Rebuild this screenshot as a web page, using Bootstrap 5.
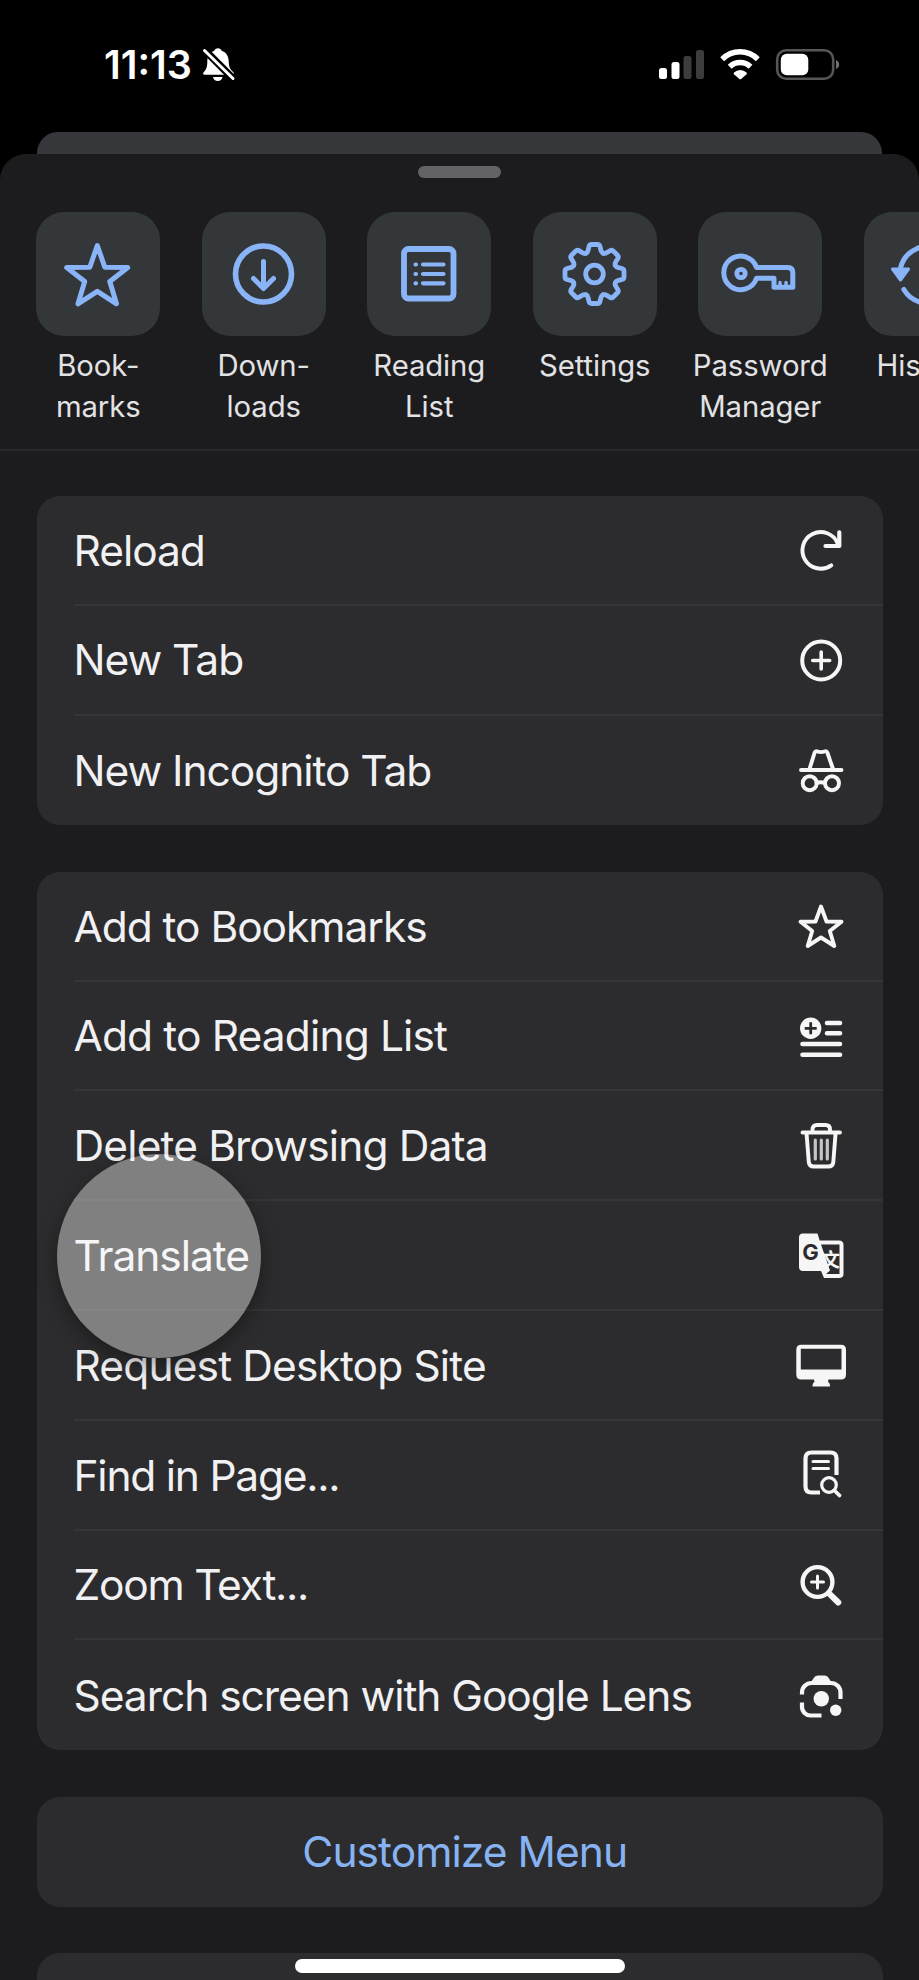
<!DOCTYPE html>
<html lang="en">
<head>
<meta charset="utf-8">
<meta name="viewport" content="width=device-width, initial-scale=1">
<title>Browser menu</title>
<link rel="stylesheet" href="https://cdn.jsdelivr.net/npm/bootstrap@5.3.0/dist/css/bootstrap.min.css">
<style>
html,body{height:1980px;overflow:hidden}
body{background:#000;color:#f1f1f3;font-family:Inter,"Liberation Sans",sans-serif}
.screen{width:919px;height:1980px}
.status{height:132px;padding:45px 79px 0 104px}
.clock{font-size:39.5px;line-height:40px;font-weight:600;letter-spacing:0;color:#fff;width:98px;white-space:nowrap}
.behind{height:22px;margin:0 37px;background:#36373a;border-radius:21px 21px 0 0}
.sheet{height:1826px;background:#1c1c1e;border-radius:26px 26px 0 0}
.grabber{width:83px;height:12px;margin-top:12px;background:#636367}
.shortcuts{margin:34px 0 0 15.5px;height:237px}
.shortcut{flex:0 0 165.5px;font-size:29.3px;line-height:41px;letter-spacing:-.1px;color:#e2e2e4}
.tile{width:124px;height:124px;border-radius:28px;background:#343739;margin-bottom:8.500px}
.tile svg{fill:none;stroke:#8ab4f8;stroke-width:5;stroke-linecap:round;stroke-linejoin:round}
.rule{height:2px;background:#29292d}
.menu{margin:0 37px;width:845.5px;border-radius:23px;background:#2c2c2e}
.menu-a{margin-top:45px}
.menu-b,.menu-c,.menu-d{margin-top:46.5px}
.menu .entry{height:109.8px;margin-left:36.500px;padding-right:34.500px;font-size:42.5px;letter-spacing:-1.050px;line-height:50px;white-space:nowrap;border-bottom:2.4px solid #353538}
.menu .entry:last-child{border-bottom:0}
.entry span{padding-top:1.500px}
.menu .entry.loose{letter-spacing:-.87px}
.menu .entry.tight{letter-spacing:-1.240px}
.entry svg{fill:none;stroke:#f6f6f7;stroke-width:3.9;stroke-linecap:round;stroke-linejoin:round}
.entry svg text{letter-spacing:0}
.entry .solid{fill:#f6f6f7;stroke:none}
.entry .dark{fill:#2c2c2e;stroke:none}
.menu-c{height:110px;font-size:42.5px;letter-spacing:-.950px;color:#87b3f2;padding-left:10px}
.menu-d{height:60px}
.touch{width:204px;height:204px;left:57px;top:1154px;background:rgba(255,255,255,.4);box-shadow:0 7px 20px rgba(0,0,0,.36)}
.home{width:330px;height:14px;left:294.5px;top:1959px}
</style>
</head>
<body>
<main class="screen position-relative overflow-hidden">
  <div class="status d-flex justify-content-between align-items-start">
    <div class="d-flex">
      <div class="clock">11:13</div>
      <svg width="34" height="40" viewBox="0 0 34 40" fill="#fff"><path d="M16 3.200c1.800 0 3.300 1 3.700 2.600 4.400 1.500 6.800 5.300 7 10.200.2 6 1.200 8 4.600 11.300.8.800.6 2.400-.8 2.400H2.600C1 29.700.7 28.200 1.700 27.200 4.900 23.800 5.300 21 5.300 16c.2-5 2.700-8.800 7-10.200C12.700 4.200 14.200 3.200 16 3.200zM11 32h9.500c-.4 2.400-2.200 4-4.700 4S11.400 34.400 11 32z"/><path d="M2.500 4.800L31.500 34" stroke="#000" stroke-width="7.500"/><path d="M2.500 5.500L31 33.500" stroke="#fff" stroke-width="3" stroke-linecap="round"/></svg>
    </div>
    <svg width="182" height="40" viewBox="0 0 182 40" fill="#fff"><rect x="1" y="23" width="8" height="11" rx="2.500"/><rect x="13.500" y="17" width="8" height="17" rx="2.500"/><g fill="#3c3c3c"><rect x="25.500" y="11" width="8" height="23" rx="2.500"/><rect x="38" y="5" width="8" height="29" rx="2.500"/></g><g fill="none" stroke="#fff" stroke-width="5.500"><path d="M64.200 14.300a25 25 0 0 1 35.600 0"/><path d="M71.700 21.700a15 15 0 0 1 20.800 0"/></g><path d="M76 27.500a9 9 0 0 1 12.500 0q.8.900 0 1.700L83.500 33.700q-1.200 1-2.400 0L76 29.200q-.8-.8 0-1.700z"/><rect x="119.200" y="5.200" width="56" height="28.600" rx="9" fill="none" stroke="#565656" stroke-width="2.600"/><rect x="122.800" y="8.800" width="27.500" height="21.400" rx="6"/><path d="M178 15v9q3.200-1.500 3.200-4.500t-3.200-4.500z" fill="#707070"/></svg>
  </div>
  <div class="behind"></div>
  <section class="sheet overflow-hidden">
    <div class="d-flex justify-content-center"><div class="grabber rounded-pill"></div></div>
    <nav class="shortcuts d-flex">
      <div class="shortcut d-flex flex-column align-items-center text-center"><div class="tile"><svg width="124" height="124"><path d="M61.300 33.500L68.800 55.300 91.800 55.500 73.800 69.500 80.500 91.800 61.300 79.300 42 91.800 48.700 69.500 30.700 55.500 53.800 55.300z"/></svg></div>Book-<br>marks</div>
      <div class="shortcut d-flex flex-column align-items-center text-center"><div class="tile"><svg width="124" height="124"><circle cx="61.500" cy="62" r="28" stroke-width="5.600"/><path d="M61.500 49.500V76M51.500 66.500l10 10 10-10"/></svg></div>Down-<br>loads</div>
      <div class="shortcut d-flex flex-column align-items-center text-center"><div class="tile"><svg width="124" height="124"><rect x="37" y="37" width="49.500" height="49.500" rx="4.500" stroke-width="5.800"/><path d="M48.500 52.500h.5M48.500 62h.5M48.500 71.300h.5M56 52.500h20.500M56 62h20.500M56 71.300h20.500" stroke-width="4.200"/></svg></div>Reading<br>List</div>
      <div class="shortcut d-flex flex-column align-items-center text-center"><div class="tile"><svg width="124" height="124"><defs><path id="tooth" d="M-8.600-20.800Q-6.800-21.600-6.300-24L-5.500-27.500Q-5-29.500-3-29.500H3Q5-29.500 5.500-27.500L6.300-24Q6.800-21.600 8.600-20.800"/></defs><g transform="translate(61.500 62)" stroke-width="4.800"><use href="#tooth"/><use href="#tooth" transform="rotate(45)"/><use href="#tooth" transform="rotate(90)"/><use href="#tooth" transform="rotate(135)"/><use href="#tooth" transform="rotate(180)"/><use href="#tooth" transform="rotate(225)"/><use href="#tooth" transform="rotate(270)"/><use href="#tooth" transform="rotate(315)"/><circle r="8.800"/></g></svg></div>Settings</div>
      <div class="shortcut d-flex flex-column align-items-center text-center"><div class="tile"><svg width="124" height="124"><path d="M58.500 55.500H90Q94.800 55.500 94.800 60.500V75.300H76V66.200H58.500A16.800 16.800 0 1 1 58.500 55.500z"/><circle cx="43" cy="61.500" r="4.200" stroke-width="4.800"/><path d="M82 75V70.500M88 75V70.500" stroke-width="3.400"/></svg></div>Password<br>Manager</div>
      <div class="shortcut d-flex flex-column align-items-center text-center"><div class="tile"><svg width="124" height="124"><path d="M36.500 56A28.500 28.500 0 1 1 39.800 77.500"/><path d="M28.500 57h16L36.500 68z" fill="#8ab4f8" stroke-width="3"/></svg></div>History</div>
    </nav>
    <div class="rule"></div>
    <div class="menu menu-a">
      <div class="entry d-flex align-items-center justify-content-between"><span>Reload</span><svg width="54" height="54"><path d="M37.300 42.300A18.300 18.300 0 1 1 43.700 20.500"/><path d="M45.300 9.300V23H31.500" stroke-width="4.200"/></svg></div>
      <div class="entry d-flex align-items-center justify-content-between"><span>New Tab</span><svg width="54" height="54"><circle cx="27.200" cy="27.500" r="19" stroke-width="4"/><path d="M18.700 27.500h17M27.200 19v17" stroke-width="3.600"/></svg></div>
      <div class="entry d-flex align-items-center justify-content-between"><span>New Incognito Tab</span><svg width="54" height="54"><path d="M7 27H47.500M15.500 26L20.500 10q.8-2.300 3-1.500 3.500 1.200 7 0 2.300-.8 3 1.500L39 26M22.600 40q4.200-1.500 8 0"/><circle cx="15.700" cy="40.200" r="7"/><circle cx="38" cy="40.200" r="7"/></svg></div>
    </div>
    <div class="menu menu-b">
      <div class="entry d-flex align-items-center justify-content-between"><span>Add to Bookmarks</span><svg width="54" height="54"><path d="M27 7.500L32.500 22.500 47.500 22.800 35.800 32 40.300 47 27 38.500 13.700 47 18.200 32 6.500 22.800 21.500 22.500z"/></svg></div>
      <div class="entry loose d-flex align-items-center justify-content-between"><span>Add to Reading List</span><svg width="54" height="54"><circle class="solid" cx="16.700" cy="19.300" r="10.700"/><path d="M10.700 19.300h12M16.700 13.300v12" stroke="#2c2c2e" stroke-width="2.800" stroke-linecap="butt"/><path d="M33 14H46M33 24.300H46M8.500 35H46M8.500 45.700H46" stroke-width="4.600"/></svg></div>
      <div class="entry loose d-flex align-items-center justify-content-between"><span>Delete Browsing Data</span><svg width="54" height="54"><path d="M8.500 14.500H46M18.500 14v-2.500Q18.500 7 23 7h8.500q4.500 0 4.500 4.500V14M12.500 15l2.300 29q.4 4.500 5 4.500h14.500q4.600 0 5-4.500l2.300-29"/><path d="M21.300 22v19M27.300 22v19M33.300 22v19" stroke="#c4c4c6" stroke-width="3.200"/></svg></div>
      <div class="entry d-flex align-items-center justify-content-between"><span>Translate</span><svg width="54" height="54"><path class="solid" d="M9 5.500H23.500L25.700 12.500H45Q49.500 12.500 49.500 17V46Q49.500 50 45 50H30L27 43H9Q5 43 5 39V9.500Q5 5.500 9 5.500z"/><path class="dark" d="M27 16.500H45.500V46H32L36 42.500z"/><text x="16.500" y="32" font-family="Inter" font-weight="700" font-size="22" text-anchor="middle" class="dark">G</text><text x="36.500" y="38.500" font-family="Noto Sans CJK SC" font-weight="700" font-size="19" text-anchor="middle" class="solid">文</text></svg></div>
      <div class="entry loose d-flex align-items-center justify-content-between"><span>Request Desktop Site</span><svg width="54" height="54"><path class="solid" fill-rule="evenodd" d="M7.300 6.700H47Q52 6.700 52 11.700V36.500Q52 41.500 47 41.500H34.500L34 44Q36 44.500 36 48.500H18.500Q18.500 44.500 20.500 44L20 41.500H7.300Q2.300 41.500 2.300 36.500V11.700Q2.300 6.700 7.300 6.700zM6.800 10.800V31.500H47.500V10.800z"/></svg></div>
      <div class="entry tight d-flex align-items-center justify-content-between"><span>Find in Page...</span><svg width="54" height="54"><path d="M42.500 27V10.500Q42.500 4.500 36.500 4.500H17.500Q11.500 4.500 11.500 10.500V38.500Q11.500 44.500 17.500 44.500H26" stroke-width="4.200" stroke-linecap="butt"/><path d="M19 13.500H34.500M19 20.500H34.500" stroke-width="3"/><circle cx="35" cy="37" r="7.300" stroke-width="3.200"/><path d="M40.500 42.500L45.500 47.500" stroke-width="3.800"/></svg></div>
      <div class="entry tight d-flex align-items-center justify-content-between"><span>Zoom Text...</span><svg width="54" height="54"><circle cx="23.500" cy="24" r="14.900" stroke-width="4.400"/><path d="M35.500 35.800L44.300 44.500" stroke-width="6"/><path d="M17.500 24h12M23.500 18v12" stroke-width="3"/></svg></div>
      <div class="entry d-flex align-items-center justify-content-between"><span>Search screen with Google Lens</span><svg width="54" height="54"><path d="M8 26.500V24.500a9.500 9.500 0 0 1 9.500-9.500H37a9.500 9.500 0 0 1 9.500 9.500V31M8 34.500v4.500a8.500 8.500 0 0 0 8.500 8.500H27.500" stroke-width="4.200" stroke-linecap="butt"/><path class="solid" d="M16.500 15l3.200-5q1.300-2.500 4-2.500h7q2.700 0 4 2.500l3.200 5z"/><circle class="solid" cx="27.300" cy="30.700" r="7.700"/><circle class="solid" cx="41.700" cy="42.300" r="5.700"/></svg></div>
    </div>
    <div class="menu menu-c d-flex align-items-center justify-content-center">Customize Menu</div>
    <div class="menu menu-d"></div>
  </section>
  <div class="touch position-absolute rounded-circle"></div>
  <div class="home position-absolute rounded-pill bg-white"></div>
</main>
<script src="https://cdn.jsdelivr.net/npm/bootstrap@5.3.0/dist/js/bootstrap.bundle.min.js"></script>
</body>
</html>
